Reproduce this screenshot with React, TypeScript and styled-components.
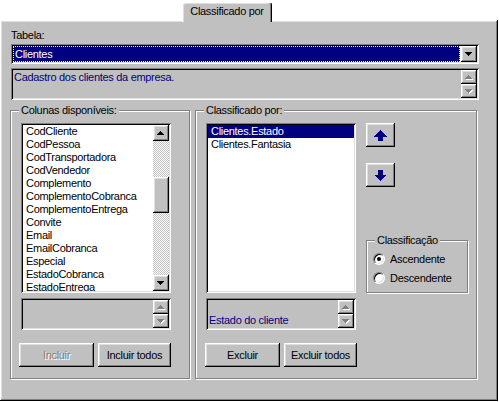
import React from "react";
import styled, { createGlobalStyle, css } from "styled-components";

const GlobalStyle = createGlobalStyle`
  html, body {
    margin: 0;
    padding: 0;
    background: #fff;
  }
  body {
    font-family: "Liberation Sans", Arial, sans-serif;
    font-size: 11px;
    letter-spacing: -0.3px;
    color: #000;
  }
  * {
    box-sizing: border-box;
  }
`;

const raised = css`
  background: #c0c0c0;
  box-shadow: inset -1px -1px #000, inset 1px 1px #fff, inset -2px -2px #808080,
    inset 2px 2px #dfdfdf;
`;

const sunken = css`
  box-shadow: inset 1px 1px #808080, inset -1px -1px #fff, inset 2px 2px #000,
    inset -2px -2px #dfdfdf;
`;

const leftColumns = [
  "CodCliente",
  "CodPessoa",
  "CodTransportadora",
  "CodVendedor",
  "Complemento",
  "ComplementoCobranca",
  "ComplementoEntrega",
  "Convite",
  "Email",
  "EmailCobranca",
  "Especial",
  "EstadoCobranca",
  "EstadoEntrega",
];

const sortedColumns = ["Clientes.Estado", "Clientes.Fantasia"];

const SmallArrow = ({ dir, disabled }: { dir: "up" | "down"; disabled?: boolean }) => {
  const pts = dir === "up" ? "3.5,0 7.5,4 -0.5,4" : "-0.5,0 7.5,0 3.5,4";
  return (
    <svg width="8" height="5" viewBox="0 0 8 5" shapeRendering="crispEdges">
      {disabled && <polygon points={pts} fill="#fff" transform="translate(1 1)" />}
      <polygon points={pts} fill={disabled ? "#808080" : "#000"} />
    </svg>
  );
};

const MoveArrow = ({ dir }: { dir: "up" | "down" }) => (
  <svg width="13" height="11" viewBox="0 0 13 11" shapeRendering="crispEdges">
    <polygon
      points={
        dir === "up"
          ? "6.5,0 13,6.5 9,6.5 9,11 4,11 4,6.5 0,6.5"
          : "4,0 9,0 9,4.5 13,4.5 6.5,11 0,4.5 4,4.5"
      }
      fill="#000080"
    />
  </svg>
);

const App = () => {
  return (
    <>
      <GlobalStyle />
      <Page>
        <TabStrip>
          <Tab>Classificado por</Tab>
        </TabStrip>
        <Panel>
          <FieldLabel>Tabela:</FieldLabel>
          <Combo>
            <ComboField>Clientes</ComboField>
            <ScrollButton $h={16}>
              <SmallArrow dir="down" />
            </ScrollButton>
          </Combo>
          <Description>
            <MemoText $top={1}>Cadastro dos clientes da empresa.</MemoText>
            <ScrollColumn>
              <ScrollButton>
                <SmallArrow dir="up" disabled />
              </ScrollButton>
              <ScrollButton>
                <SmallArrow dir="down" disabled />
              </ScrollButton>
            </ScrollColumn>
          </Description>

          <GroupsRow>
            <Frame $w={180} $h={269}>
              <GroupLabel>Colunas disponíveis:</GroupLabel>
              <ListBox>
                <ListItems>
                  {leftColumns.map((c) => (
                    <ListItem key={c}>{c}</ListItem>
                  ))}
                </ListItems>
                <ScrollColumn>
                  <ScrollButton $h={16}>
                    <SmallArrow dir="up" />
                  </ScrollButton>
                  <Track>
                    <Thumb $offset={36} />
                  </Track>
                  <ScrollButton $h={16}>
                    <SmallArrow dir="down" />
                  </ScrollButton>
                </ScrollColumn>
              </ListBox>
              <Memo>
                <MemoText $top={14} />
                <ScrollColumn>
                  <ScrollButton>
                    <SmallArrow dir="up" disabled />
                  </ScrollButton>
                  <ScrollButton>
                    <SmallArrow dir="down" disabled />
                  </ScrollButton>
                </ScrollColumn>
              </Memo>
              <ButtonRow $shift={-2}>
                <PushButton $w={75} disabled>
                  Incluir
                </PushButton>
                <PushButton $w={73}>Incluir todos</PushButton>
              </ButtonRow>
            </Frame>

            <Frame $w={282} $h={269}>
              <GroupLabel>Classificado por:</GroupLabel>
              <TopRow>
                <ListBox>
                  <ListItems>
                    {sortedColumns.map((c, i) => (
                      <ListItem key={c} $selected={i === 0}>
                        {c}
                      </ListItem>
                    ))}
                  </ListItems>
                </ListBox>
                <SideColumn>
                  <ArrowButton>
                    <MoveArrow dir="up" />
                  </ArrowButton>
                  <ArrowButton $gap={16}>
                    <MoveArrow dir="down" />
                  </ArrowButton>
                  <RadioFrame $w={102} $h={53}>
                    <GroupLabel>Classificação</GroupLabel>
                    <RadioRow>
                      <RadioCircle $checked />
                      Ascendente
                    </RadioRow>
                    <RadioRow>
                      <RadioCircle />
                      Descendente
                    </RadioRow>
                  </RadioFrame>
                </SideColumn>
              </TopRow>
              <Memo>
                <MemoText $top={14}>Estado do cliente</MemoText>
                <ScrollColumn>
                  <ScrollButton>
                    <SmallArrow dir="up" disabled />
                  </ScrollButton>
                  <ScrollButton>
                    <SmallArrow dir="down" disabled />
                  </ScrollButton>
                </ScrollColumn>
              </Memo>
              <ButtonRow $shift={-1}>
                <PushButton $w={75}>Excluir</PushButton>
                <PushButton $w={73}>Excluir todos</PushButton>
              </ButtonRow>
            </Frame>
          </GroupsRow>
        </Panel>
      </Page>
    </>
  );
};

export default App;

const Page = styled.div`
  width: 499px;
  height: 402px;
  display: flex;
  flex-direction: column;
  background: #fff;
`;

const TabStrip = styled.div`
  height: 20px;
  display: flex;
  align-items: flex-end;
  padding-left: 182px;
`;

const Tab = styled.div`
  position: relative;
  z-index: 1;
  width: 90px;
  height: 20px;
  margin-bottom: -2px;
  padding-top: 2px;
  background: #c0c0c0;
  border: 1px solid;
  border-color: #fff #000 transparent #fff;
  border-bottom: none;
  border-radius: 3px 3px 0 0;
  box-shadow: inset -1px 0 #808080, inset 1px 1px #dfdfdf;
  text-align: center;
  line-height: 13px;
`;

const Panel = styled.div`
  ${raised};
  width: 498px;
  height: 381px;
  padding: 9px 19px 0 11px;
  display: flex;
  flex-direction: column;
`;

const FieldLabel = styled.div`
  height: 13px;
  line-height: 13px;
`;

const Combo = styled.div`
  ${sunken};
  height: 20px;
  margin-top: 2px;
  padding: 2px;
  display: flex;
  background: #fff;
`;

const ComboField = styled.div`
  flex: 1;
  margin-right: 1px;
  padding-left: 1px;
  background: #000080;
  color: #fff;
  border: 1px dotted #ffff80;
  line-height: 14px;
`;

const Description = styled.div`
  ${sunken};
  height: 32px;
  margin-top: 4px;
  padding: 2px;
  display: flex;
  background: #c0c0c0;
`;

const MemoText = styled.div<{ $top: number }>`
  flex: 1;
  padding: ${(p) => p.$top}px 0 0 1px;
  line-height: 13px;
  color: #000080;
  overflow: hidden;
  white-space: nowrap;
`;

const ScrollColumn = styled.div`
  width: 16px;
  display: flex;
  flex-direction: column;
`;

const ScrollButton = styled.div<{ $h?: number }>`
  ${raised};
  width: 16px;
  ${(p) => (p.$h ? `height: ${p.$h}px;` : "flex: 1;")}
  display: flex;
  align-items: center;
  justify-content: center;
`;

const Track = styled.div`
  flex: 1;
  background: repeating-conic-gradient(#fff 0 25%, #c0c0c0 0 50%) 0 0 / 2px 2px;
`;

const Thumb = styled.div<{ $offset: number }>`
  ${raised};
  height: 36px;
  margin-top: ${(p) => p.$offset}px;
`;

const GroupsRow = styled.div`
  display: flex;
  gap: 5px;
  margin-top: 10px;
  margin-left: -1px;
`;

const Frame = styled.div<{ $w: number; $h: number }>`
  position: relative;
  width: ${(p) => p.$w}px;
  height: ${(p) => p.$h}px;
  border: 1px solid #808080;
  box-shadow: inset 1px 1px #fff, 1px 1px #fff;
  padding: 12px 0 0 10px;
`;

const GroupLabel = styled.div`
  position: absolute;
  top: -7px;
  left: 8px;
  padding: 0 2px;
  background: #c0c0c0;
  line-height: 13px;
  white-space: nowrap;
`;

const ListBox = styled.div`
  ${sunken};
  width: 150px;
  height: 170px;
  padding: 2px;
  display: flex;
  background: #fff;
`;

const ListItems = styled.div`
  flex: 1;
  overflow: hidden;
`;

const ListItem = styled.div<{ $selected?: boolean }>`
  height: 13px;
  line-height: 13px;
  padding-left: 3px;
  white-space: nowrap;
  background: ${(p) => (p.$selected ? "#000080" : "transparent")};
  color: ${(p) => (p.$selected ? "#fff" : "#000")};
`;

const Memo = styled.div`
  ${sunken};
  width: 150px;
  height: 32px;
  margin-top: 5px;
  padding: 2px;
  display: flex;
  background: #c0c0c0;
`;

const ButtonRow = styled.div<{ $shift: number }>`
  display: flex;
  gap: 4px;
  margin-top: 13px;
  margin-left: ${(p) => p.$shift}px;
`;

const PushButton = styled.button<{ $w: number }>`
  ${raised};
  width: ${(p) => p.$w}px;
  height: 24px;
  padding: 0;
  border: none;
  font: inherit;
  letter-spacing: inherit;
  color: #000;
  text-align: center;
  &:disabled {
    color: #808080;
    text-shadow: 1px 1px #fff;
  }
`;

const TopRow = styled.div`
  display: flex;
  gap: 10px;
`;

const SideColumn = styled.div`
  display: flex;
  flex-direction: column;
`;

const ArrowButton = styled.div<{ $gap?: number }>`
  ${raised};
  width: 29px;
  height: 24px;
  margin-top: ${(p) => p.$gap ?? 0}px;
  display: flex;
  align-items: center;
  justify-content: center;
`;

const RadioFrame = styled(Frame)`
  margin-top: auto;
  padding: 8px 0 0 6px;
`;

const RadioRow = styled.div`
  height: 19px;
  display: flex;
  align-items: center;
  gap: 5px;
  white-space: nowrap;
`;

const RadioCircle = styled.span<{ $checked?: boolean }>`
  position: relative;
  width: 12px;
  height: 12px;
  flex: none;
  border-radius: 50%;
  background: #fff;
  border: 1px solid;
  border-color: #808080 #fff #fff #808080;
  box-shadow: inset 1px 1px #000, inset -1px -1px #dfdfdf;
  &::after {
    content: "";
    display: ${(p) => (p.$checked ? "block" : "none")};
    position: absolute;
    left: 3px;
    top: 3px;
    width: 4px;
    height: 4px;
    border-radius: 50%;
    background: #000;
  }
`;
